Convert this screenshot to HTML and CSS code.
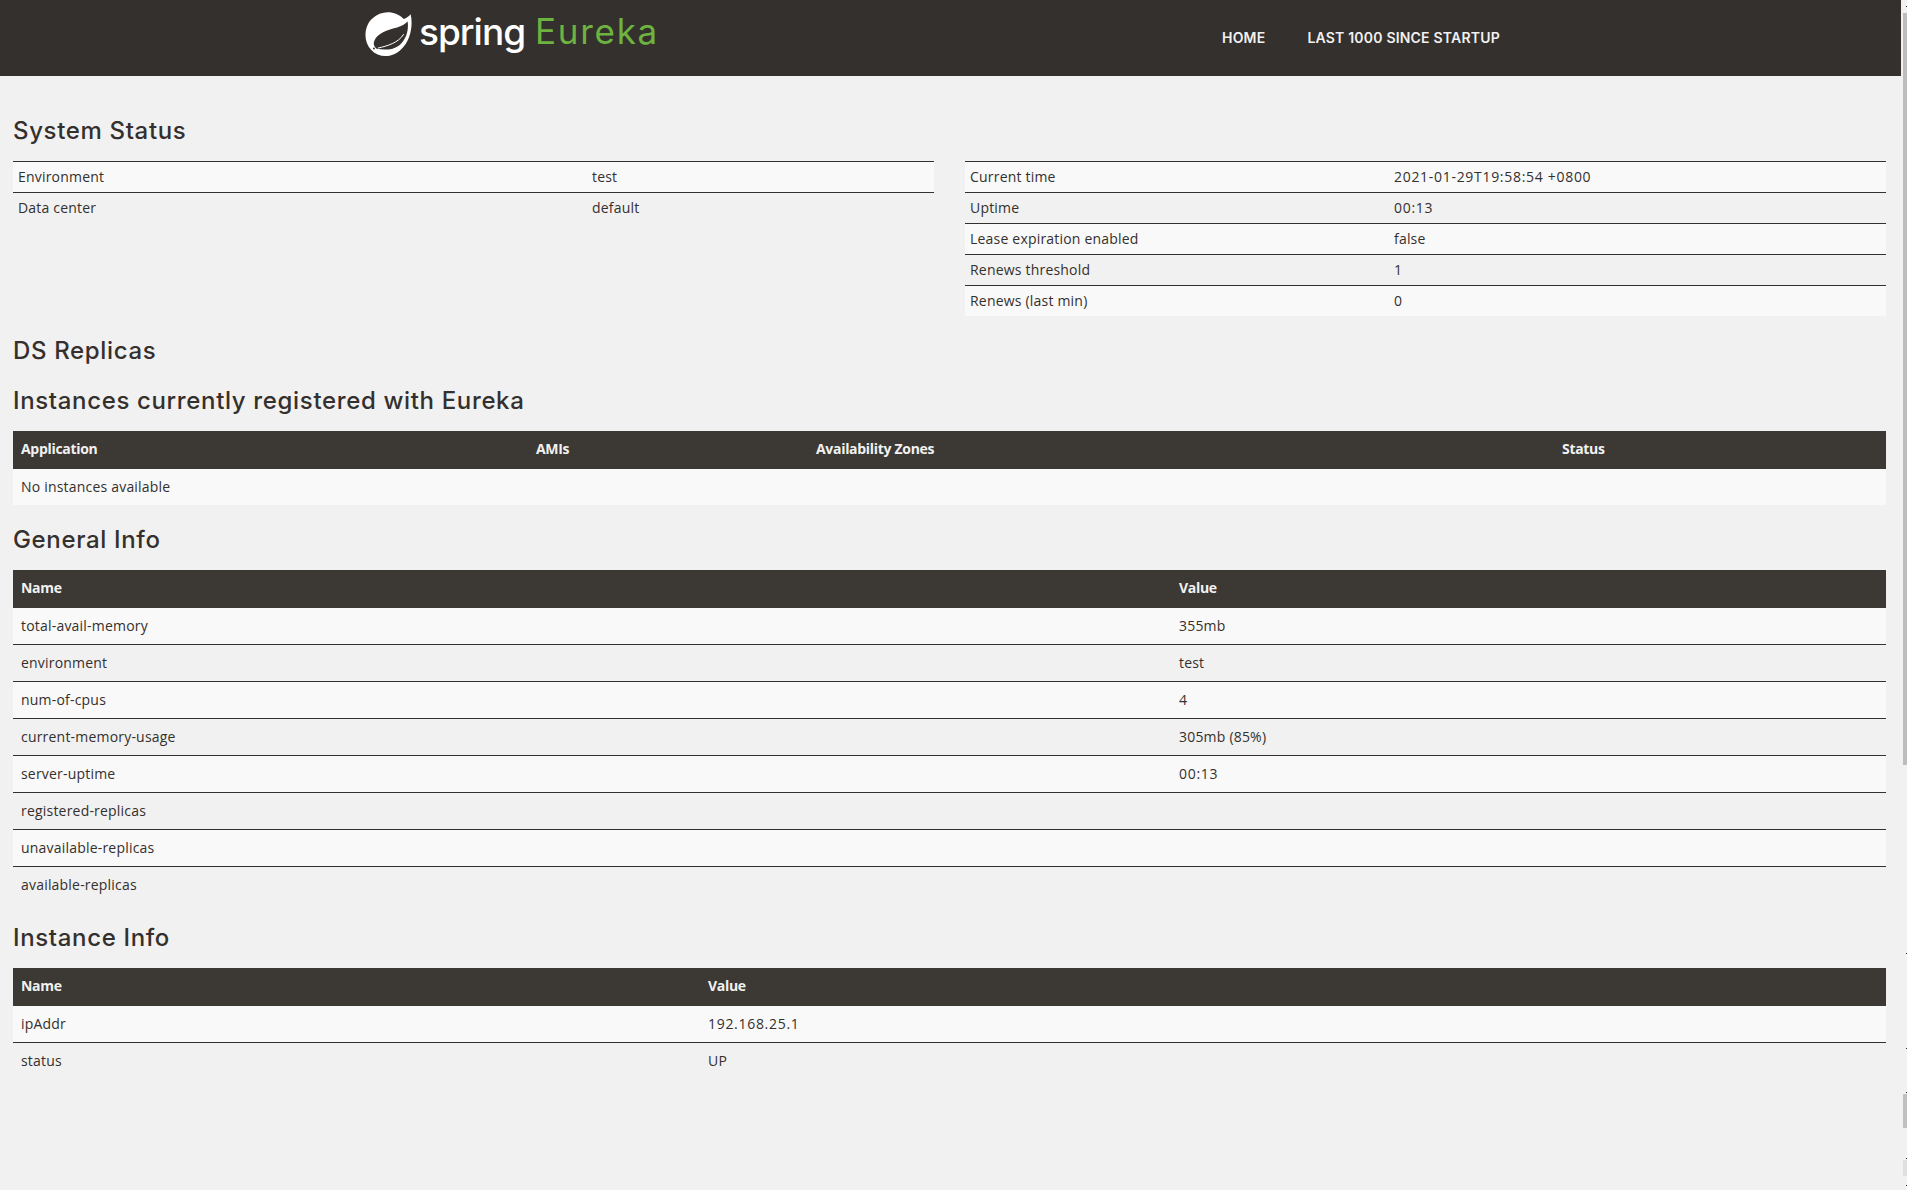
FILE: index.html
```html
<!DOCTYPE html>
<html lang="en">
<head>
    <meta charset="UTF-8">
    <title>Eureka</title>
    <link rel="stylesheet" href="styles.css">
</head>
<body>
    <nav class="navbar">
        <a class="brand" href="#">
            <svg class="brand-icon" viewBox="25 18 145 145">
                <path class="leaf-disc" d="M163 28C172 68 158 112 136 132C110 160 68 162 44 136C18 110 22 62 48 40C74 14 118 16 142 42C150 40 158 34 163 28Z"/>
                <path class="leaf-cut" d="M154 50C158 82 146 108 128 122C112 135 84 137 60 132C54 126 48 118 54 106C62 88 88 76 122 68C136 64 146 58 154 50Z"/>
                <path class="leaf-stem" d="M64 130C92 124 126 114 142 88"/>
                <circle class="leaf-dot" cx="52" cy="131" r="3"/>
            </svg>
            <span class="brand-spring">spring</span>
            <span class="brand-eureka">Eureka</span>
        </a>
        <ul class="nav-links">
            <li><a href="#">Home</a></li>
            <li><a href="#">Last 1000 since startup</a></li>
        </ul>
    </nav>

    <main class="content">
        <h1 class="first">System Status</h1>
        <div class="status-row">
            <table class="plain status-left">
                <tr><td>Environment</td><td>test</td></tr>
                <tr><td>Data center</td><td>default</td></tr>
            </table>
            <table class="plain status-right">
                <tr><td>Current time</td><td class="num">2021-01-29T19:58:54 +0800</td></tr>
                <tr><td>Uptime</td><td class="num">00:13</td></tr>
                <tr><td>Lease expiration enabled</td><td>false</td></tr>
                <tr><td>Renews threshold</td><td>1</td></tr>
                <tr><td>Renews (last min)</td><td>0</td></tr>
            </table>
        </div>

        <h1 class="replicas">DS Replicas</h1>
        <h1 class="instances">Instances currently registered with Eureka</h1>
        <table class="data apps">
            <thead>
                <tr><th>Application</th><th>AMIs</th><th>Availability Zones</th><th>Status</th></tr>
            </thead>
            <tbody>
                <tr><td colspan="4">No instances available</td></tr>
            </tbody>
        </table>

        <h1>General Info</h1>
        <table class="data general">
            <thead>
                <tr><th>Name</th><th>Value</th></tr>
            </thead>
            <tbody>
                <tr><td>total-avail-memory</td><td>355mb</td></tr>
                <tr><td>environment</td><td>test</td></tr>
                <tr><td>num-of-cpus</td><td>4</td></tr>
                <tr><td>current-memory-usage</td><td>305mb (85%)</td></tr>
                <tr><td>server-uptime</td><td class="num">00:13</td></tr>
                <tr><td>registered-replicas</td><td></td></tr>
                <tr><td>unavailable-replicas</td><td></td></tr>
                <tr><td>available-replicas</td><td></td></tr>
            </tbody>
        </table>

        <h1>Instance Info</h1>
        <table class="data instance">
            <thead>
                <tr><th>Name</th><th>Value</th></tr>
            </thead>
            <tbody>
                <tr><td>ipAddr</td><td class="num">192.168.25.1</td></tr>
                <tr><td>status</td><td>UP</td></tr>
            </tbody>
        </table>
    </main>

    <div class="scrollbar">
        <span class="thumb thumb-main"></span>
        <span class="thumb thumb-mid"></span>
        <span class="thumb thumb-low"></span>
        <span class="tick tick-1"></span>
        <span class="tick tick-2"></span>
        <span class="tick tick-3"></span>
        <span class="tick tick-4"></span>
        <span class="tick tick-5"></span>
        <span class="tick tick-6"></span>
    </div>
</body>
</html>
```

FILE: styles.css
```css
html, body {
    margin: 0;
    padding: 0;
}
body {
    position: relative;
    width: 1901px;
    height: 1190px;
    overflow: hidden;
    background-color: #f1f1f1;
    color: #34302d;
    font-family: "Open Sans", Arial, sans-serif;
    font-size: 14px;
    letter-spacing: 0.2px;
}
html {
    background-color: #f1f1f1;
}

/* Top bar */
.navbar {
    display: flex;
    align-items: flex-start;
    height: 76px;
    background-color: #34302d;
}
.brand {
    display: flex;
    align-items: flex-start;
    margin-left: 365px;
    width: 849px;
    text-decoration: none;
}
.brand-icon {
    width: 48px;
    height: 48px;
    margin-top: 11px;
}
.leaf-disc {
    fill: #fff;
}
.leaf-cut, .leaf-dot {
    fill: #34302d;
}
.leaf-stem {
    fill: none;
    stroke: #fff;
    stroke-width: 3;
}
.brand-spring {
    margin: 9px 0 0 6px;
    font-family: Inter, sans-serif;
    font-size: 37px;
    font-weight: 500;
    line-height: 45px;
    letter-spacing: -1px;
    color: #fff;
}
.brand-eureka {
    margin: 9px 0 0 10px;
    font-family: Inter, sans-serif;
    font-size: 35px;
    font-weight: 400;
    line-height: 45px;
    letter-spacing: 1.7px;
    color: #6db33f;
}
.nav-links {
    display: flex;
    gap: 42px;
    margin: 28px 0 0 8px;
    padding: 0;
    list-style: none;
}
.nav-links a {
    font-family: Inter, sans-serif;
    font-size: 14px;
    font-weight: 600;
    line-height: 20px;
    letter-spacing: 0.2px;
    text-transform: uppercase;
    text-decoration: none;
    color: #f1f1f1;
}

/* Page */
.content {
    padding: 0 15px 0 13px;
}
h1 {
    margin: 20px 0 15px;
    font-family: Inter, sans-serif;
    font-size: 24px;
    font-weight: 500;
    line-height: 30px;
    letter-spacing: 0.65px;
    color: #34302d;
}
h1.first {
    margin-top: 40px;
}
h1.replicas {
    margin-top: 20px;
    margin-bottom: 0;
}
h1.instances {
    margin-top: 20px;
}
table {
    width: 100%;
    table-layout: fixed;
    border-collapse: collapse;
}
td, th {
    text-align: left;
}
td.num {
    letter-spacing: 0.7px;
}

/* Status tables */
.status-row {
    display: grid;
    grid-template-columns: 921px 921px;
    gap: 31px;
    align-items: start;
}
.plain {
    border-top: 1px solid #34302d;
}
.plain td {
    height: 28px;
    padding: 0 5px 2px;
    border-top: 1px solid #34302d;
}
.plain tr:first-child td {
    border-top: 0;
}
.plain tr:nth-child(odd) td {
    background-color: #f9f9f9;
}
.status-left td:first-child {
    width: 564px;
}
.status-right td:first-child {
    width: 414px;
}

/* Data tables */
.data th {
    height: 34px;
    padding: 0 8px 4px;
    background-color: #3c3834;
    color: #f1f1f1;
    font-weight: 700;
    letter-spacing: -0.3px;
}
.data td {
    height: 34px;
    padding: 0 8px 2px;
    border-top: 1px solid #34302d;
}
.data tbody tr:first-child td {
    border-top: 0;
}
.data tbody tr:nth-child(odd) td {
    background-color: #f9f9f9;
}
.apps th:nth-child(1) {
    width: 499px;
}
.apps th:nth-child(2) {
    width: 264px;
}
.apps th:nth-child(3) {
    width: 730px;
}
.general th:first-child {
    width: 1142px;
}
.instance th:first-child {
    width: 671px;
}

/* Scrollbar overview down the right edge */
.scrollbar {
    position: fixed;
    top: 0;
    right: 0;
    width: 4px;
    height: 1190px;
}
.thumb {
    position: absolute;
    left: 0;
    width: 4px;
}
.thumb-main {
    top: 13px;
    height: 752px;
    background-color: #bdbdbd;
}
.thumb-mid {
    top: 1094px;
    height: 34px;
    background-color: #c0c0c0;
}
.thumb-low {
    top: 1160px;
    height: 16px;
    background-color: #e0e0e0;
}
.tick {
    position: absolute;
    right: 0;
    width: 1px;
    height: 1px;
    background-color: #34302d;
}
.tick-1 { top: 6px; }
.tick-2 { top: 953px; }
.tick-3 { top: 1048px; }
.tick-4 { top: 1092px; }
.tick-5 { top: 1158px; }
.tick-6 { top: 1185px; }
```
